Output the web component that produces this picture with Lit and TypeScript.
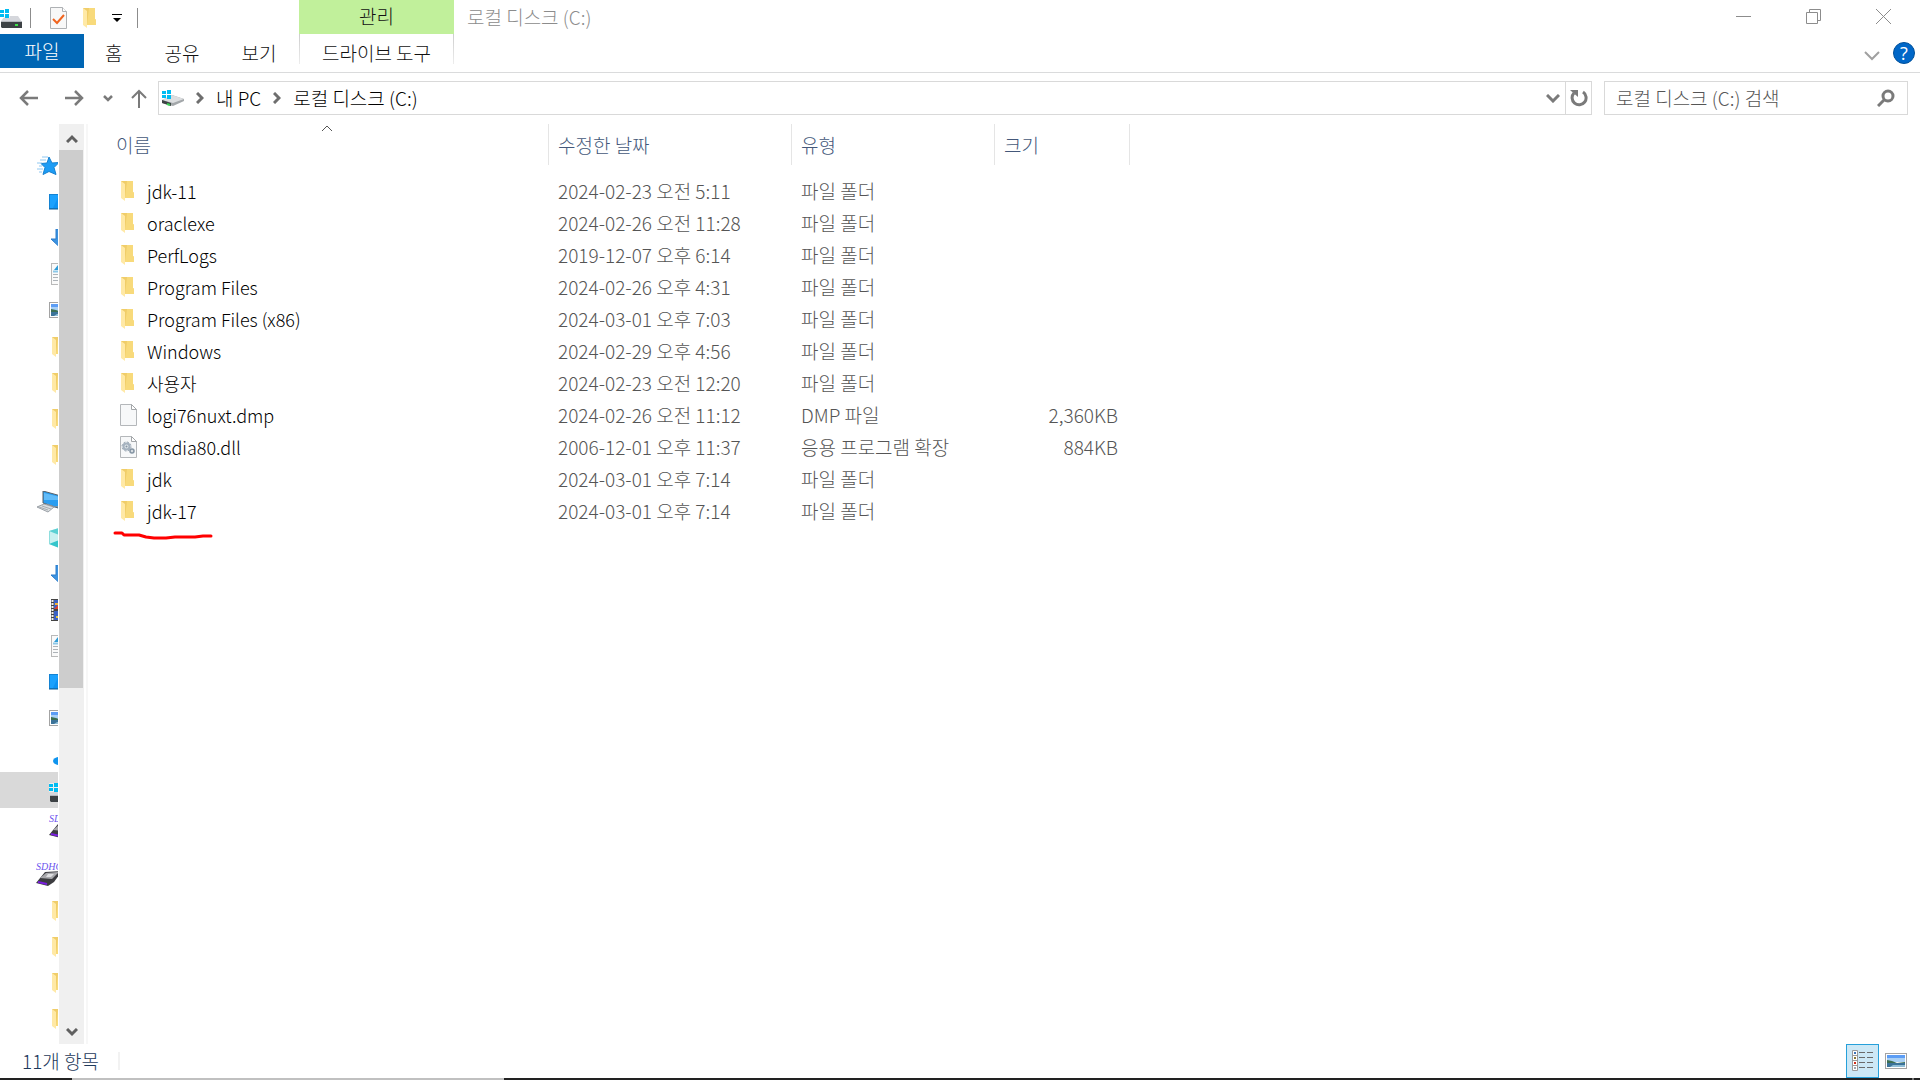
import { LitElement, html, svg, css, TemplateResult } from "lit";
import { customElement, property } from "lit/decorators.js";

type IconName =
  | "folder" | "file" | "dll" | "star" | "desktop" | "download" | "document" | "picture"
  | "pc" | "cube" | "video" | "music" | "drive" | "sdhc" | "check" | "details";

const windowsLogo = svg`
  <rect x="0" y="1" width="4" height="3" fill="#00bcf2"/><rect x="5" y="0" width="4" height="4" fill="#00bcf2"/>
  <rect x="0" y="5" width="4" height="3" fill="#00bcf2"/><rect x="5" y="5" width="4" height="4" fill="#00bcf2"/>`;

const landscape = svg`
  <rect x="0.5" y="0.5" width="21" height="15" fill="#fff" stroke="#a3a3a3"/>
  <rect x="2" y="2" width="18" height="4" fill="#5c9df5"/>
  <rect x="2" y="5" width="18" height="4" fill="#a9d0f5"/>
  <path d="M2 7l5 1 5 2 8-1v2H2z" fill="#3d6f52"/>
  <path d="M2 10h18v4H2z" fill="#3b7399"/>
  <path d="M8 12h12v2H5z" fill="#8fbdd6"/>`;

const art: Record<IconName, [number, number, TemplateResult]> = {
  folder: [15, 20, svg`
    <path d="M1 0h12v11l1 1v5H1z" fill="#f0cd69"/>
    <path d="M7 0h6v11l1 1v5H5z" fill="#f8da7b"/>
    <path d="M1 0l4 3v17l-4-3z" fill="#ffe9a6"/>`],
  file: [17, 22, svg`
    <path d="M.5.5h11l5 5v16H.5z" fill="#f7f8f9" stroke="#b4b7ba"/>
    <path d="M11.5.5v5h5z" fill="#fff" stroke="#a3a6a9"/>`],
  dll: [17, 22, svg`
    <path d="M.5.5h11l5 5v16H.5z" fill="#f7f8f9" stroke="#b4b7ba"/>
    <path d="M11.5.5v5h5z" fill="#fff" stroke="#a3a6a9"/>
    <circle cx="6.5" cy="10.5" r="3" fill="#dfe5ea" stroke="#a5b2bf" stroke-width="2"/>
    <circle cx="6.5" cy="10.5" r="4.5" fill="none" stroke="#8f9eac" stroke-dasharray="2 1.5"/>
    <circle cx="6.5" cy="10.5" r="1" fill="#8494a3"/>
    <circle cx="12" cy="15" r="2" fill="#d5dbe0" stroke="#8494a3" stroke-width="1.5"/>`],
  star: [24, 20, svg`
    <path d="M13 1l3 6 7-.5-5 5 2 7-7-3-6 3 2-7-4-4 6-.5z" fill="#1c9cf5" stroke="#1680cf"/>
    <path d="M6 1h6M4 4h6M1 7h5M3 10h3M1 13h6M3 16h3" stroke="#8fc8f2"/>`],
  desktop: [24, 16, svg`
    <rect x=".5" y=".5" width="23" height="14" fill="#1ba1fd" stroke="#1483d3"/>
    <path d="M10 1h13v13H4z" fill="#0e93f3"/><path d="M0 15h24" stroke="#0d5e99"/>`],
  download: [18, 18, svg`<path d="M5 0h7v10h5l-8.500 8-8.500-8h5z" fill="#3c93e0" stroke="#2b7ccb"/>`],
  document: [17, 22, svg`
    <rect x=".5" y=".5" width="16" height="21" fill="#fafafa" stroke="#b9b9b9"/>
    <path d="M3 7l4-5 4 5z" fill="#2e9bd6"/><path d="M2 8.500h12" stroke="#8cc8e8" stroke-width="2"/>
    <path d="M2 11.500h12M2 14.500h12M2 17.500h12" stroke="#adb3b8"/>`],
  picture: [22, 16, landscape],
  pc: [26, 22, svg`
    <path d="M7 0l18 5v13L7 12z" fill="#2a9df0" stroke="#566069"/>
    <path d="M8 2l16 4v3L8 9z" fill="#62bcf9"/>
    <path d="M1 16l7-3 10 3-6 5z" fill="#d9dde0" stroke="#9aa0a6"/>
    <path d="M3 16l9 3M6 15l9 3" stroke="#a7adb2"/>
    <path d="M11 13l8 3 5-1" fill="none" stroke="#8d959c"/>`],
  cube: [20, 20, svg`
    <path d="M0 3l10-3 10 3v13l-10 4-10-4z" fill="#c9f1f1"/>
    <path d="M0 3l10-3 10 3-10 4z" fill="#5bd0d3"/><path d="M0 16l10-4 10 4-10 4z" fill="#35c5cb"/>
    <path d="M.5 3v13" stroke="#8fdede"/>`],
  video: [22, 22, svg`
    <rect width="22" height="22" fill="#444"/>
    <path d="M1.500 1v20" stroke="#f2f2f2" stroke-width="2" stroke-dasharray="2 1"/>
    <rect x="3" y="1" width="16" height="9" fill="#3b62c4"/><rect x="3" y="12" width="16" height="9" fill="#3b62c4"/>
    <path d="M3 10l4-4 3 4z" fill="#e23f2b"/><path d="M4 5h3" stroke="#f5b335" stroke-width="2"/>
    <path d="M5 18h4" stroke="#e3c53c" stroke-width="2"/>`],
  music: [18, 22, svg`<ellipse cx="8" cy="18" rx="6" ry="4" fill="#0f94ee"/><path d="M11 0h3v18h-3z" fill="#0f94ee"/>`],
  drive: [22, 19, svg`
    <path d="M1 12l4-5h13l4 6z" fill="#d5d7dc"/>
    <path d="M1 12h21v1H1z" fill="#b5b8bd"/>
    <path d="M1 13h21v6H2l-1-1z" fill="#3d4245"/>
    <rect x="15" y="15" width="3" height="2" fill="#3fe04b"/>
    <path d="M0 0h10v9H0z" fill="#fff" fill-opacity="0.6"/>
    ${windowsLogo}`],
  sdhc: [30, 24, svg`
    <text x="0" y="8" font-family="Liberation Serif, serif" font-size="10" font-style="italic" fill="#6d55ee">SDHC</text>
    <path d="M9 10l17-1-8 11-6 4-12-3z" fill="#3c3c40"/>
    <path d="M10 11l13-1-7 7-12-1z" fill="#a8a8ac"/><path d="M12 12h6l-3 3h-5z" fill="#dedee0"/>
    <path d="M2 20l9 2" stroke="#7a1fe0" stroke-width="2"/>`],
  check: [17, 22, svg`
    <path d="M.5.5h12l4 4v17H.5z" fill="#f8f8f8" stroke="#aeb1b4"/>
    <path d="M12.500.5v4h4" fill="#fff" stroke="#aeb1b4"/>
    <path d="M3 12l4 4 7-8" fill="none" stroke="#f0641e" stroke-width="2"/>`],
  details: [22, 22, svg`
    <path d="M.5.5h5v20h-5zM.5 5.500h5M.5 10.500h5M.5 15.500h5" fill="#fff" stroke="#9a9a9a"/>
    <rect x="2" y="2" width="2" height="2" fill="#3c74b8"/><rect x="2" y="7" width="2" height="2" fill="#8b7a36"/>
    <rect x="2" y="12" width="2" height="2" fill="#cf2f1c"/><rect x="2" y="17" width="2" height="2" fill="#9aa7b0"/>
    <path d="M7 2.500h6M15 2.500h6M7 7.500h6M15 7.500h6M7 12.500h6M15 12.500h6M7 17.500h6M15 17.500h6" stroke="#6b6b6b"/>`],
};

const icon = (name: IconName) => {
  const [w, h, body] = art[name];
  return html`<svg width=${w} height=${h} viewBox="0 0 ${w} ${h}" aria-hidden="true">${body}</svg>`;
};

const stroke = (w: number, h: number, d: string, width = 1, color = "currentColor") =>
  html`<svg width=${w} height=${h} viewBox="0 0 ${w} ${h}" aria-hidden="true"
    ><path d=${d} fill="none" stroke=${color} stroke-width=${width}></path></svg>`;

const crumbDrive = html`<svg width="22" height="16" viewBox="0 0 22 16" aria-hidden="true">
  <path d="M0 10l10-5 12 4v2l-11 5-11-3z" fill="#a3a7aa"/>
  <path d="M0 10l10-5 12 4-11 4z" fill="#dcdee0"/>
  <path d="M0 10l9 3v3l-9-3z" fill="#3e4346"/><path d="M5 14l3 1" stroke="#39d353" stroke-width="2"/>
  ${windowsLogo}
</svg>`;

@customElement("side-tree")
export class SideTree extends LitElement {
  static styles = css`
    :host { display: flex; flex: none; }
    .items { width: 58px; overflow: hidden; padding-top: 24px; box-sizing: border-box; }
    .group { display: flex; flex-direction: column; margin-bottom: 12px; }
    .item {
      display: flex; align-items: center; height: 36px; width: 100%; padding: 0 0 0 49px;
      border: 0; background: none; text-align: left;
    }
    .item.top { padding-left: 36px; }
    .item.inset { padding-left: 51px; }
    .item.low { padding-left: 51px; padding-top: 2px; }
    .item.selected { background: #d9d9d9; padding-top: 4px; }
    .item svg { flex: none; }
    .bar { display: flex; flex-direction: column; width: 25px; margin-left: 1px; background: #f0f0f0; }
    .arrow {
      display: flex; align-items: center; justify-content: center; height: 26px; padding: 2px 0 0;
      border: 0; background: none; color: #606060;
    }
    .track { flex: 1; }
    .thumb { width: 24px; height: 62%; background: #cdcdcd; }
    .edge { width: 2px; margin-left: 2px; background: #f7f7f7; }
  `;

  private groups: [IconName, string][][] = [
    [["star", "즐겨찾기"], ["desktop", "바탕 화면"], ["download", "다운로드"], ["document", "문서"], ["picture", "사진"],
     ["folder", "폴더"], ["folder", "폴더"], ["folder", "폴더"], ["folder", "폴더"]],
    [["pc", "내 PC"], ["cube", "3D 개체"], ["download", "다운로드"], ["video", "동영상"], ["document", "문서"],
     ["desktop", "바탕 화면"], ["picture", "사진"], ["music", "음악"], ["drive", "로컬 디스크 (C:)"], ["sdhc", "SDHC"]],
    [["sdhc", "SDHC"], ["folder", "폴더"], ["folder", "폴더"], ["folder", "폴더"], ["folder", "폴더"]],
  ];

  private kind(name: IconName, index: number) {
    if (index === 0) return "top";
    if (name === "drive") return "selected";
    if (name === "folder") return "low";
    return ["document", "download", "video", "music"].includes(name) ? "inset" : "";
  }

  render() {
    return html`
      <nav class="items" aria-label="탐색 창">
        ${this.groups.map(g => html`<div class="group">
          ${g.map(([n, label], i) => html`<button class="item ${this.kind(n, i)}" aria-label=${label}>${icon(n)}</button>`)}
        </div>`)}
      </nav>
      <div class="bar">
        <button class="arrow" aria-label="위로 스크롤">${stroke(12, 9, "M1 8l5-5 5 5", 3)}</button>
        <div class="track"><div class="thumb"></div></div>
        <button class="arrow" aria-label="아래로 스크롤">${stroke(12, 9, "M1 1l5 5 5-5", 3)}</button>
      </div>
      <div class="edge"></div>`;
  }
}

interface Entry { icon: IconName; name: string; date: string; type: string; size?: string; marked?: boolean; }

@customElement("file-list")
export class FileList extends LitElement {
  @property({ attribute: false }) entries: Entry[] = [];

  static styles = css`
    :host { display: block; flex: 1; min-width: 0; }
    .table { table-layout: fixed; width: 1042px; border-collapse: separate; border-spacing: 0; }
    .name { width: 461px; }
    .date { width: 243px; }
    .type { width: 203px; }
    .size { width: 135px; }
    .head {
      position: relative; height: 41px; padding: 0 0 0 9px; box-sizing: border-box;
      border-right: 1px solid #e5e5e5; color: #44587a; font-weight: inherit; text-align: left;
    }
    .head.first { padding-left: 28px; }
    .sort { position: absolute; left: 233px; top: 1px; display: flex; }
    .body::before { content: ""; display: block; height: 10px; }
    .cell { height: 32px; padding: 0 0 0 9px; color: #555; white-space: nowrap; }
    .cell.first { padding-left: 32px; color: #000; font-size: 18px; }
    .cell.amount { padding: 0 12px 0 0; text-align: right; }
    .entry { position: relative; display: flex; align-items: center; }
    .glyph { display: flex; width: 27px; }
    .scribble { position: absolute; left: -7px; top: 32px; }
  `;

  render() {
    return html`<table class="table">
      <colgroup><col class="name"><col class="date"><col class="type"><col class="size"></colgroup>
      <thead><tr>
        <th class="head first" scope="col">이름<span class="sort">${stroke(13, 7, "M1 6l5-5 5 5", 1, "#555")}</span></th>
        <th class="head" scope="col">수정한 날짜</th>
        <th class="head" scope="col">유형</th>
        <th class="head" scope="col">크기</th>
      </tr></thead>
      <tbody class="body">
        ${this.entries.map(e => html`<tr>
          <td class="cell first"><div class="entry"><span class="glyph">${icon(e.icon)}</span>${e.name}
            ${e.marked ? html`<svg class="scribble" width="100" height="12" viewBox="0 0 100 12" aria-hidden="true">
              <path d="M2 3h7l2 2h15l7 2 8 1h12l9-1h20l8-1h8" fill="none" stroke="#f00" stroke-width="3" stroke-linecap="round" stroke-linejoin="round"></path>
            </svg>` : ""}</div></td>
          <td class="cell">${e.date}</td>
          <td class="cell">${e.type}</td>
          <td class="cell amount">${e.size ?? ""}</td>
        </tr>`)}
      </tbody>
    </table>`;
  }
}

const folder = (name: string, date: string, marked = false): Entry =>
  ({ icon: "folder", name, date, type: "파일 폴더", marked });

@customElement("app-root")
export class AppRoot extends LitElement {
  static styles = css`
    :host {
      display: flex; flex-direction: column; height: 100vh; overflow: hidden; background: #fff; color: #111;
      font: 300 19px/26px "Noto Sans CJK KR", sans-serif;
    }
    button, input { font: inherit; color: inherit; border: 0; background: none; padding: 0; margin: 0; }
    a { color: inherit; text-decoration: none; }
    svg { flex: none; }
    .title { display: flex; height: 34px; }
    .quick { display: flex; align-items: center; width: 299px; padding-top: 2px; box-sizing: border-box; }
    .quick button, .window button, .nav button { display: flex; align-items: center; justify-content: center; }
    .rule { width: 1px; height: 20px; background: #8c8c8c; }
    .app { display: flex; width: 30px; }
    .quick .tools { display: flex; align-items: center; gap: 15px; padding: 0 15px 0 19px; }
    .context { width: 155px; background: #c1f09b; text-align: center; line-height: 32px; }
    .caption { flex: 1; margin: 0; padding-left: 13px; font: inherit; line-height: 34px; color: #8c8c8c; }
    .window { display: flex; padding-right: 2px; color: #8c8c8c; }
    .window button { width: 70px; height: 33px; }
    .ribbon { display: flex; height: 38px; border-bottom: 1px solid #dadbdc; }
    .tab { padding: 0 21px; line-height: 38px; height: 34px; }
    .tab.file { width: 84px; padding: 0; background: #0066b4; color: #fff; text-align: center; line-height: 34px; }
    .tab.drive {
      margin-left: auto; width: 155px; padding: 0; height: 30px; border: 1px solid;
      border-width: 0 1px; border-image: linear-gradient(#ccc, #eee) 1;
    }
    .tabs { display: flex; width: 454px; }
    .help { display: flex; align-items: center; gap: 12px; margin-left: auto; padding: 0 5px 0 0; color: #a0a0a0; }
    .round {
      width: 22px; height: 22px; box-sizing: border-box; border: 1px solid #00509a; border-radius: 50%; background: #0067c8; color: #fff;
      font: 400 18px/20px "Open Sans", sans-serif; text-align: center;
    }
    .nav { display: flex; align-items: center; height: 34px; padding: 8px 12px 9px 14px; color: #7a7a7a; }
    .back { width: 29px; }
    .forward { width: 29px; margin-left: 17px; }
    .recent { width: 22px; margin-left: 8px; }
    .up { width: 24px; margin: 0 7px 0 8px; }
    .address { display: flex; align-items: center; flex: 1; height: 32px; border: 1px solid #d9d9d9; }
    .crumbs { display: flex; align-items: center; flex: 1; gap: 12px; padding-left: 3px; color: #000; }
    .arrow { display: flex; color: #6e6e6e; }
    .drop { width: 24px; height: 32px; }
    .refresh { width: 26px; height: 32px; border-left: 1px solid #d9d9d9; }
    .search { display: flex; align-items: center; width: 302px; height: 32px; margin-left: 12px; border: 1px solid #d9d9d9; }
    .field { flex: 1; min-width: 0; padding-left: 11px; outline: 0; }
    .field::placeholder { color: #555; opacity: 1; }
    .go { width: 42px; }
    .main { display: flex; flex: 1; min-height: 0; }
    .status { display: flex; align-items: center; height: 34px; padding: 0 13px 0 22px; color: #1e395b; }
    .count { padding-right: 19px; line-height: 36px; }
    .mark { width: 2px; height: 18px; background: #f2f2f2; }
    .views { display: flex; margin-left: auto; gap: 6px; }
    .views button { display: flex; align-items: center; justify-content: center; height: 34px; }
    .views .on { width: 33px; border: 1px solid #26a0da; background: #cce8f6; box-sizing: border-box; }
    .strip { display: flex; height: 2px; background: #222; }
    .strip::before { content: ""; width: 432px; margin-left: 72px; background: #c0c0c0; }
    .strip::after { content: ""; width: 2px; margin: 0 6px 0 auto; background: #777; }
  `;

  private entries: Entry[] = [
    folder("jdk-11", "2024-02-23 오전 5:11"),
    folder("oraclexe", "2024-02-26 오전 11:28"),
    folder("PerfLogs", "2019-12-07 오후 6:14"),
    folder("Program Files", "2024-02-26 오후 4:31"),
    folder("Program Files (x86)", "2024-03-01 오후 7:03"),
    folder("Windows", "2024-02-29 오후 4:56"),
    folder("사용자", "2024-02-23 오전 12:20"),
    { icon: "file", name: "logi76nuxt.dmp", date: "2024-02-26 오전 11:12", type: "DMP 파일", size: "2,360KB" },
    { icon: "dll", name: "msdia80.dll", date: "2006-12-01 오후 11:37", type: "응용 프로그램 확장", size: "884KB" },
    folder("jdk", "2024-03-01 오후 7:14"),
    folder("jdk-17", "2024-03-01 오후 7:14", true),
  ];

  render() {
    const chevron = html`<span class="arrow">${stroke(8, 12, "M1 1l5 5-5 5", 3)}</span>`;
    return html`
      <header class="title">
        <div class="quick">
          <span class="app">${icon("drive")}</span><span class="rule"></span>
          <div class="tools">
            <button aria-label="속성">${icon("check")}</button>
            <button aria-label="새 폴더">${icon("folder")}</button>
            <button aria-label="빠른 실행 도구 모음 사용자 지정">
              <svg width="10" height="8" viewBox="0 0 10 8"><path d="M0 0h10v1H0zM1 4h8l-4 4z" fill="#000"></path></svg>
            </button>
          </div>
          <span class="rule"></span>
        </div>
        <div class="context">관리</div>
        <h1 class="caption">로컬 디스크 (C:)</h1>
        <div class="window">
          <button aria-label="최소화">${stroke(15, 15, "M0 7.5h15")}</button>
          <button aria-label="이전 크기로 복원">${stroke(15, 15, "M.5 3.5h11v11H.5zM3.5 3V.5h11v11H12")}</button>
          <button aria-label="닫기">${stroke(15, 15, "M0 0l15 15M15 0L0 15")}</button>
        </div>
      </header>
      <div class="ribbon">
        <div class="tabs">
          <button class="tab file">파일</button>
          <button class="tab">홈</button>
          <button class="tab">공유</button>
          <button class="tab">보기</button>
          <button class="tab drive">드라이브 도구</button>
        </div>
        <div class="help">
          <button aria-label="리본 확장">${stroke(17, 10, "M1 1l7 7 7-7", 2)}</button>
          <button class="round" aria-label="도움말">?</button>
        </div>
      </div>
      <div class="nav">
        <button class="back" aria-label="뒤로">${stroke(19, 16, "M19 8H2M9 1L2 8l7 7", 2.5)}</button>
        <button class="forward" aria-label="앞으로">${stroke(19, 16, "M0 8h17M10 1l7 7-7 7", 2.5)}</button>
        <button class="recent" aria-label="최근 위치">${stroke(10, 7, "M1 1l4 4 4-4", 2.5)}</button>
        <button class="up" aria-label="위로">${stroke(16, 19, "M8 19V2M1 9l7-7 7 7", 2)}</button>
        <div class="address">
          <div class="crumbs">${crumbDrive}${chevron}<a href="#pc">내 PC</a>${chevron}<a href="#c">로컬 디스크 (C:)</a></div>
          <button class="drop" aria-label="이전 위치">${stroke(14, 9, "M1 1l6 6 6-6", 3)}</button>
          <button class="refresh" aria-label="새로 고침">
            <svg width="18" height="18" viewBox="0 0 18 18"><path d="M13 3a7 7 0 1 1-9 1" fill="none" stroke="currentColor" stroke-width="3"></path><path d="M0 1h8v7z" fill="currentColor"></path></svg>
          </button>
        </div>
        <div class="search">
          <input class="field" type="search" aria-label="검색" placeholder="로컬 디스크 (C:) 검색">
          <button class="go" aria-label="검색 실행">
            <svg width="18" height="18" viewBox="0 0 18 18"><circle cx="11" cy="7" r="5" fill="none" stroke="currentColor" stroke-width="3"></circle><path d="M7 11l-6 6" stroke="currentColor" stroke-width="3"></path></svg>
          </button>
        </div>
      </div>
      <main class="main">
        <side-tree></side-tree>
        <file-list .entries=${this.entries}></file-list>
      </main>
      <footer class="status">
        <span class="count">11개 항목</span><span class="mark"></span>
        <div class="views">
          <button class="on" aria-label="자세히">${icon("details")}</button>
          <button aria-label="큰 아이콘">${icon("picture")}</button>
        </div>
      </footer>
      <div class="strip"></div>`;
  }
}
